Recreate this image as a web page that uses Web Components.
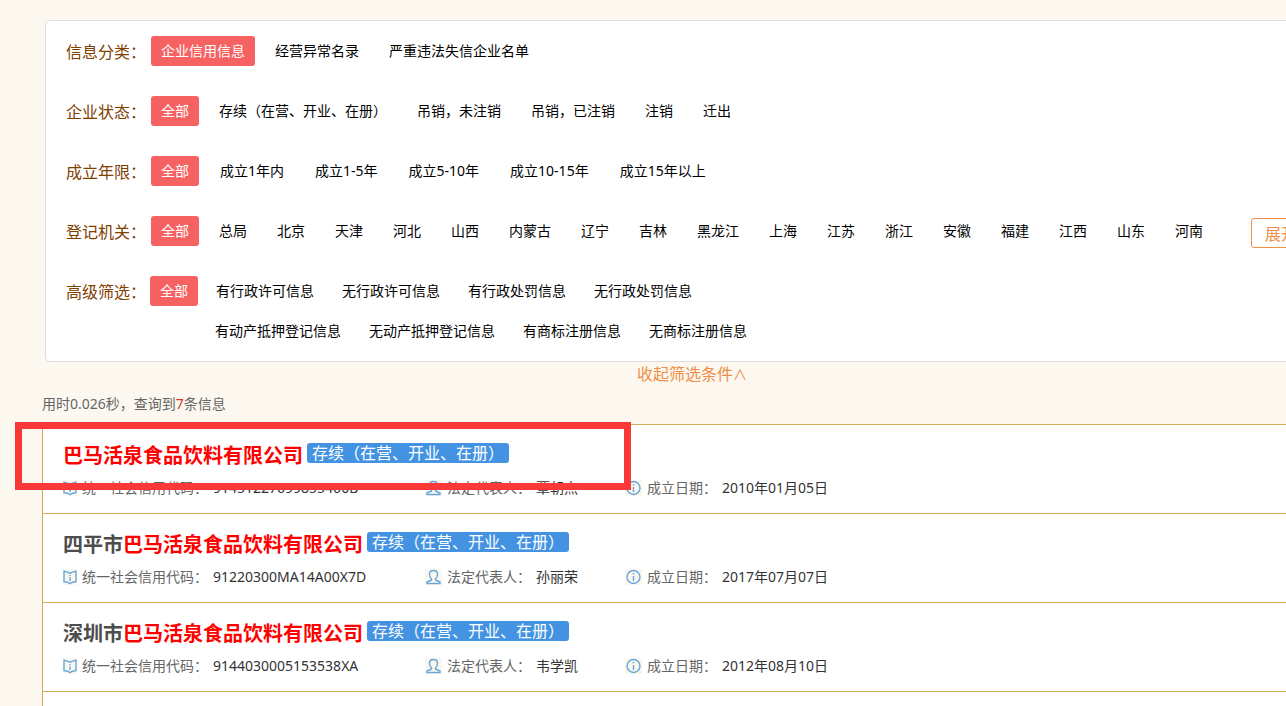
<!DOCTYPE html>
<html lang="zh-CN">
<head>
<meta charset="utf-8">
<title>企业信用信息查询</title>
<style>
html, body { margin: 0; }
body { background: #fcf8f0; overflow-x: hidden; font: 14px/20px "Noto Sans", "Noto Sans CJK SC", sans-serif; color: #333; }
</style>
</head>
<body>
<search-page></search-page>
<script>
const define = (name, html, setup) => {
  const tpl = document.createElement('template');
  tpl.innerHTML = html;
  customElements.define(name, class extends HTMLElement {
    connectedCallback() {
      if (this.shadowRoot) return;
      this.attachShadow({ mode: 'open' }).append(tpl.content.cloneNode(true));
      if (setup) setup(this, this.shadowRoot);
    }
  });
};

define('filter-option', `
<style>
:host { display: block; flex: none; }
button { display: block; height: 30px; padding: 0 10px; border: 0; border-radius: 3px; background: none; font: inherit; line-height: 30px; color: #000; white-space: nowrap; cursor: pointer; }
:host([selected]) button { background: #f66262; color: #fff; }
</style>
<button type="button"><slot></slot></button>`);

define('filter-row', `
<style>
:host { display: flex; align-items: flex-start; --gap: 10px; }
.label { flex: none; width: 85px; height: 30px; font-size: 16px; line-height: 32px; color: #804000; white-space: nowrap; }
.options { display: flex; gap: var(--gap); flex: 1; }
.body { display: flex; flex-direction: column; gap: 10px; flex: 1; }
.more { display: flex; gap: var(--gap); margin-left: 55px; }
:host([compact]) { --gap: 8px; }
:host([loose]) { --gap: 11px; }
:host([compact]) .label { width: 84px; }
:host(:not([compact])) .more { display: none; }
</style>
<div class="label"><slot name="label"></slot></div>
<div class="body"><div class="options"><slot></slot></div><div class="more"><slot name="more"></slot></div></div>
<slot name="action"></slot>`);

define('expand-button', `
<style>
:host { display: block; height: 28px; margin: 2px 7px 0 0; }
button { display: block; height: 30px; padding: 0 13px; border: 1px solid #f08d47; border-radius: 3px; background: #fff; color: #f08d47; font: inherit; font-size: 16px; line-height: 30px; white-space: nowrap; }
</style>
<button type="button"><slot></slot></button>`);

define('filter-panel', `
<style>
:host { display: flex; flex-direction: column; gap: 30px; padding: 15px 20px; border: 1px solid #ddd; border-radius: 5px; background: #fff; }
</style>
<slot></slot>`);

define('status-badge', `
<style>
:host { display: block; height: 20px; padding: 0 5px; border-radius: 3px; background: #4393e2; color: #fff; font-size: 16px; font-weight: 400; line-height: 20px; white-space: nowrap; }
</style>
<slot></slot>`);

const icons = {
  code: `<svg width="14" height="16" viewBox="0 0 14 16"><path d="M1 2.200L4.500 3.200 7 4.200 9.500 3.200 13 2.200V12.600L9.500 13.200 7 14.600 4.500 13.200 1 12.600Z"/><path d="M7 6v1.200M7 8.200V12"/></svg>`,
  person: `<svg width="17" height="16" viewBox="0 0 17 16"><path d="M6.500 9.800C5.200 8.700 4.500 7 4.500 5.200 4.500 2.800 6.100 1.500 8.500 1.500S12.500 2.800 12.500 5.200C12.500 7 11.800 8.700 10.500 9.800V11L15 13V14.500H2V13L6.500 11Z"/></svg>`,
  date: `<svg width="17" height="16" viewBox="0 0 17 16"><circle cx="8.500" cy="8" r="6.500"/><path d="M8.500 4v1.500M8.500 7v5"/></svg>`
};

define('info-field', `
<style>
:host { display: flex; align-items: center; color: #666; white-space: nowrap; }
.icon { display: flex; margin-right: 5px; background: #faf7ef; }
svg { fill: none; stroke: #66a6dc; stroke-width: 1.4; }
.value { margin-left: 5px; color: #333; }
</style>
<span class="icon"></span><slot></slot><span class="value"><slot name="value"></slot></span>`,
(host, root) => { root.querySelector('.icon').innerHTML = icons[host.getAttribute('icon')]; });

define('company-result', `
<style>
:host { display: block; position: relative; padding: 15px 20px; border-bottom: 1px solid #d1ac5b; }
.head { display: flex; align-items: center; gap: 4px; height: 32px; margin-bottom: 6px; }
h3 { margin: 0; font-size: 20px; line-height: 32px; font-weight: 700; white-space: nowrap; }
a { color: #4d4d4d; text-decoration: none; }
.info { display: grid; grid-template-columns: 362px 200px 1fr; height: 20px; }
.mark { display: none; position: absolute; left: -28px; top: -3px; width: 602px; height: 54px; border: 7px solid #fb3838; pointer-events: none; }
:host([marked]) .mark { display: block; }
status-badge { margin-bottom: 6px; }
</style>
<div class="head"><h3><a href="#"><slot name="name"></slot></a></h3><status-badge><slot name="status"></slot></status-badge></div>
<div class="info">
<info-field icon="code">统一社会信用代码：<slot name="code" slot="value"></slot></info-field>
<info-field icon="person">法定代表人：<slot name="person" slot="value"></slot></info-field>
<info-field icon="date">成立日期：<slot name="date" slot="value"></slot></info-field>
</div>
<div class="mark"></div>`);

const options = (names, slot = '') => names.split(' ').map(n => `<filter-option${slot}>${n}</filter-option>`).join('');
const row = (label, first, names, extra = '', attr = '') =>
  `<filter-row ${attr}><span slot="label">${label}：</span><filter-option selected>${first}</filter-option>${options(names)}${extra}</filter-row>`;
const result = (prefix, code, person, date, attr = '') =>
  `<company-result ${attr}><span slot="name">${prefix}<em>巴马活泉食品饮料有限公司</em></span><span slot="status">存续（在营、开业、在册）</span><span slot="code">${code}</span><span slot="person">${person}</span><span slot="date">${date}</span></company-result>`;

define('search-page', `
<style>
:host { display: flex; flex-direction: column; box-sizing: border-box; min-width: 1300px; min-height: 100vh; margin-left: 42px; padding-top: 20px; }
filter-panel { margin: 0 3px; }
.collapse { align-self: center; color: #f08d47; font-family: "Noto Sans CJK SC", "DejaVu Sans", sans-serif; font-size: 16px; line-height: 22px; text-decoration: none; }
.collapse span { font-family: "DejaVu Sans", sans-serif; font-size: 14px; font-weight: 200; line-height: 1; }
.summary { margin: 10px 0; color: #666; }
.summary b { color: #d9332e; font-weight: 400; }
.results { flex: 1; border: 1px solid #d1ac5b; border-bottom: 0; background: #fff; }
em { font-style: normal; color: #f00; }
</style>
<filter-panel>
${row('信息分类', '企业信用信息', '经营异常名录 严重违法失信企业名单')}
${row('企业状态', '全部', '存续（在营、开业、在册） 吊销，未注销 吊销，已注销 注销 迁出')}
${row('成立年限', '全部', '成立1年内 成立1-5年 成立5-10年 成立10-15年 成立15年以上', '', 'loose')}
${row('登记机关', '全部', '总局 北京 天津 河北 山西 内蒙古 辽宁 吉林 黑龙江 上海 江苏 浙江 安徽 福建 江西 山东 河南', '<expand-button slot="action">展开</expand-button>')}
${row('高级筛选', '全部', '有行政许可信息 无行政许可信息 有行政处罚信息 无行政处罚信息', options('有动产抵押登记信息 无动产抵押登记信息 有商标注册信息 无商标注册信息', ' slot="more"'), 'compact')}
</filter-panel>
<a class="collapse" href="#">收起筛选条件<span>∧</span></a>
<p class="summary">用时0.026秒，查询到<b>7</b>条信息</p>
<div class="results">
${result('', '91451227699855460B', '覃朝杰', '2010年01月05日', 'marked')}
${result('四平市', '91220300MA14A00X7D', '孙丽荣', '2017年07月07日')}
${result('深圳市', '9144030005153538XA', '韦学凯', '2012年08月10日')}
</div>`);
</script>
</body>
</html>
